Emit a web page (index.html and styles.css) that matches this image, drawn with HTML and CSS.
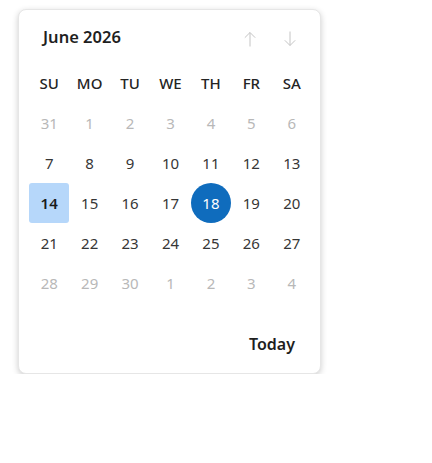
FILE: index.html
```html
<!DOCTYPE html>
<html lang="en">
<head>
    <meta charset="UTF-8">
    <meta name="viewport" content="width=device-width, initial-scale=1.0">
    <title>Date picker</title>
    <link rel="stylesheet" href="styles.css">
</head>
<body>
    <div class="page">
        <div class="calendar">
            <div class="cal-header">
                <span class="cal-title">June 2026</span>
                <div class="cal-nav">
                    <button class="nav-button" aria-label="Previous month">
                        <svg width="12" height="16" viewBox="0 0 12 16"><path d="M6 1.5V15.5M0.8 6.7L6 1.5L11.2 6.7" fill="none" stroke="currentColor" stroke-width="1"/></svg>
                    </button>
                    <button class="nav-button" aria-label="Next month">
                        <svg width="12" height="16" viewBox="0 0 12 16"><path d="M6 0.5V14.5M0.8 9.3L6 14.5L11.2 9.3" fill="none" stroke="currentColor" stroke-width="1"/></svg>
                    </button>
                </div>
            </div>

            <div class="cal-grid">
                <div class="weekday">SU</div>
                <div class="weekday">MO</div>
                <div class="weekday">TU</div>
                <div class="weekday">WE</div>
                <div class="weekday">TH</div>
                <div class="weekday">FR</div>
                <div class="weekday">SA</div>

                <div class="day other">31</div>
                <div class="day other">1</div>
                <div class="day other">2</div>
                <div class="day other">3</div>
                <div class="day other">4</div>
                <div class="day other">5</div>
                <div class="day other">6</div>

                <div class="day">7</div>
                <div class="day">8</div>
                <div class="day">9</div>
                <div class="day">10</div>
                <div class="day">11</div>
                <div class="day">12</div>
                <div class="day">13</div>

                <div class="day"><span class="selected">14</span></div>
                <div class="day">15</div>
                <div class="day">16</div>
                <div class="day">17</div>
                <div class="day"><span class="today">18</span></div>
                <div class="day">19</div>
                <div class="day">20</div>

                <div class="day">21</div>
                <div class="day">22</div>
                <div class="day">23</div>
                <div class="day">24</div>
                <div class="day">25</div>
                <div class="day">26</div>
                <div class="day">27</div>

                <div class="day other">28</div>
                <div class="day other">29</div>
                <div class="day other">30</div>
                <div class="day other">1</div>
                <div class="day other">2</div>
                <div class="day other">3</div>
                <div class="day other">4</div>
            </div>

            <div class="cal-footer">
                <button class="today-button">Today</button>
            </div>
        </div>
    </div>
</body>
</html>
```

FILE: styles.css
```css
body {
    margin: 0;
    font-family: "Noto Sans", "Open Sans", sans-serif;
    color: #242424;
    background: #ffffff;
}
.page {
    padding: 9px 0 0 18px;
}
.calendar {
    box-sizing: border-box;
    width: 303px;
    padding: 0 8px 0 10px;
    background: #ffffff;
    border: 1px solid #e6e6e6;
    border-radius: 8px;
    box-shadow: 0 2px 6px rgba(0, 0, 0, 0.2);
}
.cal-header {
    display: flex;
    align-items: center;
    justify-content: space-between;
    height: 53px;
}
.cal-title {
    padding-left: 14px;
    font-size: 16.5px;
    font-weight: 600;
    color: #1f1f1f;
}
.cal-nav {
    display: flex;
    padding-top: 4px;
    padding-right: 2px;
}
.nav-button {
    display: flex;
    align-items: center;
    justify-content: center;
    width: 40px;
    height: 32px;
    padding: 0;
    border: none;
    background: none;
    color: #c4c4c4;
}
.cal-grid {
    display: grid;
    grid-template-columns: repeat(7, 1fr);
    grid-auto-rows: 40px;
}
.weekday, .day {
    display: flex;
    align-items: center;
    justify-content: center;
    font-size: 15px;
}
.weekday {
    font-weight: 500;
    color: #242424;
}
.day {
    color: #363636;
}
.day.other {
    color: #b8b8b8;
}
.selected, .today {
    display: flex;
    align-items: center;
    justify-content: center;
    width: 40px;
    height: 40px;
}
.selected {
    background: #b6d7fa;
    border-radius: 3px;
    font-weight: 600;
    color: #1a1a1a;
}
.today {
    background: #0f6cbd;
    border-radius: 50%;
    color: #ffffff;
}
.cal-footer {
    display: flex;
    justify-content: flex-end;
    padding: 28px 9px 16px 0;
}
.today-button {
    height: 26px;
    padding: 0 8px;
    border: none;
    background: none;
    font-family: inherit;
    font-size: 16px;
    font-weight: 600;
    color: #1f1f1f;
}
```
